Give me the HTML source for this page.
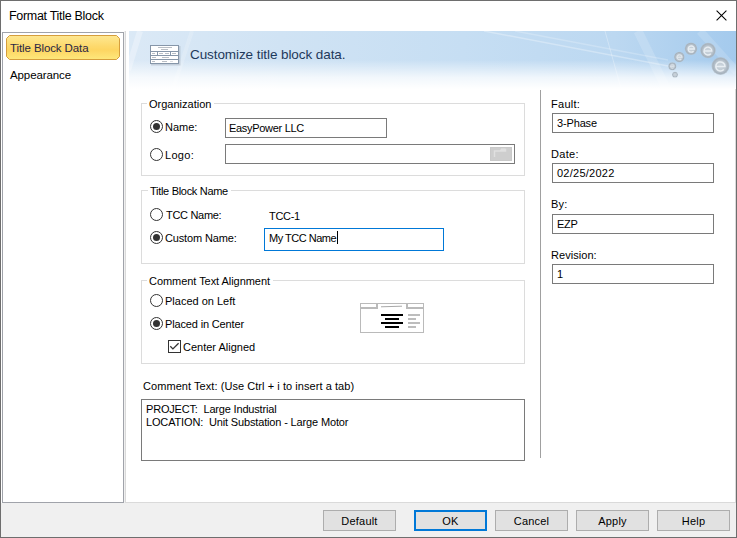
<!DOCTYPE html>
<html><head><meta charset="utf-8">
<style>
*{margin:0;padding:0;box-sizing:border-box}
html,body{width:737px;height:538px;overflow:hidden;background:#fff}
body{position:relative;font-family:"Liberation Sans",sans-serif;font-size:11px;color:#000}
.a{position:absolute;white-space:nowrap}
.t{position:absolute;white-space:nowrap;line-height:13px;letter-spacing:-0.3px}
.box{position:absolute;border:1px solid #7a7a7a;background:#fff}
.grp{position:absolute;border:1px solid #dcdcdc}
.rad{position:absolute;width:13px;height:13px;border:1px solid #333;border-radius:50%;background:#fff}
.rad.on::after{content:"";position:absolute;left:2px;top:2px;width:7px;height:7px;border-radius:50%;background:#333}
.btn{position:absolute;top:510px;height:21px;border:1px solid #adadad;background:#e1e1e1;text-align:center;line-height:21px;font-size:11px;letter-spacing:0.2px}
</style></head><body>
<!-- window borders -->
<div class="a" style="left:0;top:0;width:737px;height:1px;background:#6e6e6e"></div>
<div class="a" style="left:0;top:0;width:1px;height:538px;background:#6e6e6e"></div>
<div class="a" style="left:736px;top:0;width:1px;height:538px;background:#6e6e6e"></div>
<div class="a" style="left:0;top:537px;width:737px;height:1px;background:#6e6e6e"></div>

<!-- title -->
<div class="a" style="left:9px;top:9px;font-size:12.5px;line-height:15px;letter-spacing:-0.3px;color:#000">Format Title Block</div>
<svg class="a" style="left:716px;top:10px" width="11" height="11" viewBox="0 0 11 11"><path d="M0.6 0.6L10.4 10.4M10.4 0.6L0.6 10.4" stroke="#000" stroke-width="1.05"/></svg>

<!-- bottom area -->
<div class="a" style="left:1px;top:503px;width:735px;height:34px;background:#f0f0f0"></div>
<div class="a" style="left:124px;top:31px;width:1px;height:472px;background:#f0f0f0"></div>

<!-- left list -->
<div class="a" style="left:2px;top:32px;width:122px;height:471px;border:1px solid #a0a3aa;background:#fff"></div>
<svg class="a" style="left:6px;top:35px" width="114" height="25" viewBox="0 0 114 25">
<defs><linearGradient id="sel" x1="0" y1="0" x2="0" y2="1"><stop offset="0" stop-color="#fee892"/><stop offset="0.45" stop-color="#fdd96c"/><stop offset="0.6" stop-color="#fdd562"/><stop offset="1" stop-color="#fee87c"/></linearGradient></defs>
<path d="M3.5 0.5H110.5L113.5 3.5V21.5L110.5 24.5H3.5L0.5 21.5V3.5Z" fill="url(#sel)" stroke="#d69e3c"/>
</svg>
<div class="t" style="left:10px;top:42px;font-size:11.5px;letter-spacing:-0.1px;color:#2a2645">Title Block Data</div>
<div class="t" style="left:10px;top:69px;font-size:11.5px;letter-spacing:-0.1px">Appearance</div>

<!-- right panel -->
<div class="a" style="left:125px;top:31px;width:611px;height:472px;border:1px solid #dadada;border-top:none;background:#fff"></div>
<svg class="a" style="left:129px;top:31px" width="607" height="58" viewBox="129 31 607 58">
<defs>
<linearGradient id="bh" x1="0" y1="0" x2="1" y2="0">
<stop offset="0" stop-color="#dbe9f6"/><stop offset="0.25" stop-color="#d0e3f4"/><stop offset="0.55" stop-color="#c6def3"/><stop offset="0.8" stop-color="#bcd8f1"/><stop offset="1" stop-color="#a4caed"/>
</linearGradient>
<linearGradient id="bv" x1="0" y1="0" x2="0" y2="1">
<stop offset="0" stop-color="#fff" stop-opacity="0"/><stop offset="0.5" stop-color="#fff" stop-opacity="0"/><stop offset="0.8" stop-color="#fff" stop-opacity="0.75"/><stop offset="1" stop-color="#fff" stop-opacity="1"/>
</linearGradient>
<radialGradient id="bub" cx="0.5" cy="0.5" r="0.5">
<stop offset="0" stop-color="#ccd5dd"/><stop offset="0.55" stop-color="#bfc9d2"/><stop offset="0.85" stop-color="#a6b2bd"/><stop offset="1" stop-color="#b3bec8" stop-opacity="0.7"/>
</radialGradient>
<filter id="sb" x="-20%" y="-20%" width="140%" height="140%"><feGaussianBlur stdDeviation="0.45"/></filter>
</defs>
<rect x="129" y="31" width="607" height="58" fill="url(#bh)"/>
<g stroke="#fff" fill="none">
<path d="M484 31L668 66" stroke-opacity="0.3" stroke-width="1.5"/>
<path d="M515 31L668 60" stroke-opacity="0.22" stroke-width="1.5"/>
<path d="M605 31L622 92" stroke-opacity="0.3" stroke-width="1"/>
<path d="M638 31L668 92" stroke-opacity="0.16" stroke-width="9"/>
<path d="M700 31L737 72" stroke-opacity="0.15" stroke-width="8"/>
<path d="M192 31L172 92" stroke-opacity="0.18" stroke-width="4"/>
<path d="M140 31L128 70" stroke-opacity="0.3" stroke-width="6"/>
</g>
<rect x="129" y="31" width="607" height="58" fill="url(#bv)"/>
<g filter="url(#sb)">
<circle cx="720.5" cy="66" r="9" fill="url(#bub)"/>
<circle cx="708" cy="50.5" r="7.8" fill="url(#bub)"/>
<circle cx="691" cy="48.7" r="6.3" fill="url(#bub)"/>
<circle cx="679.3" cy="57" r="5.3" fill="url(#bub)"/>
<circle cx="672.3" cy="66.3" r="4" fill="url(#bub)"/>
<circle cx="675" cy="74.7" r="2.9" fill="url(#bub)"/>
</g>
<g fill="none" stroke="#e8eef3" stroke-linecap="butt" filter="url(#sb)">
<path d="M716 66.5H725A4.6 4.6 0 1 0 723.8 69.6" stroke-width="1.5"/>
<path d="M704.2 51H711.8A3.9 3.9 0 1 0 710.8 53.7" stroke-width="1.3"/>
<path d="M688.2 49H694.4A3.1 3.1 0 1 0 693.6 51.2" stroke-width="1.3"/>
<path d="M677 57.2H682A2.5 2.5 0 1 0 681.3 59" stroke-width="1.1" stroke-opacity="0.8"/>
<path d="M670.6 66.4H674.2A1.8 1.8 0 1 0 673.7 67.7" stroke-width="0.9" stroke-opacity="0.6"/>
</g>
</svg>
<svg class="a" style="left:148px;top:43px" width="36" height="25" viewBox="0 0 36 25">
<defs><filter id="ib" x="-10%" y="-10%" width="120%" height="120%"><feGaussianBlur stdDeviation="0.3"/></filter></defs><g filter="url(#ib)">
<rect x="3" y="3" width="29.5" height="19.5" fill="#8f99a5" opacity="0.35"/>
<rect x="2" y="2" width="29" height="19" fill="#8696a9"/>
<rect x="3" y="3" width="27" height="5" fill="#fff"/>
<rect x="3" y="9" width="6" height="3" fill="#fff"/>
<rect x="10" y="9" width="12" height="3" fill="#fff"/>
<rect x="23" y="9" width="7" height="3" fill="#fff"/>
<rect x="3" y="13" width="27" height="3" fill="#fff"/>
<rect x="3" y="17" width="27" height="3" fill="#fff"/>
<g fill="#a9b0b8" opacity="0.8">
<rect x="10" y="4" width="14" height="1"/><rect x="13" y="6" width="7" height="1"/>
<rect x="4" y="10" width="3" height="1"/><rect x="11" y="10" width="4" height="1"/><rect x="17" y="10" width="4" height="1"/><rect x="24" y="10" width="4" height="1"/>
<rect x="4" y="14" width="4" height="1"/><rect x="14" y="14" width="7" height="1"/>
<rect x="4" y="18" width="3" height="1"/><rect x="14" y="18" width="5" height="1"/><rect x="22" y="18" width="3" height="1" opacity="0.5"/>
</g>
</g></svg>
<div class="a" style="left:190px;top:47px;font-size:13.5px;line-height:16px;letter-spacing:-0.08px;color:#1e395b">Customize title block data.</div>

<!-- Organization group -->
<div class="grp" style="left:141px;top:103px;width:384px;height:73px"></div>
<div class="t" style="left:147px;top:98px;background:#fff;padding:0 3px 0 2px;letter-spacing:0">Organization</div>
<div class="rad on" style="left:150px;top:120px"></div>
<div class="t" style="left:165px;top:121px;letter-spacing:0px">Name:</div>
<div class="box" style="left:225px;top:118px;width:162px;height:20px"></div>
<div class="t" style="left:229px;top:122px">EasyPower LLC</div>
<div class="rad" style="left:150px;top:148px"></div>
<div class="t" style="left:165px;top:149px;letter-spacing:0.3px">Logo:</div>
<div class="box" style="left:225px;top:144px;width:290px;height:20px"></div>
<svg class="a" style="left:490px;top:147px" width="22" height="14" viewBox="0 0 22 14">
<rect x="0" y="0" width="22" height="14" fill="#c9c9c9"/><rect x="1" y="1" width="20" height="12" fill="#cecece"/>
<path d="M4.5 10V4H15.5V2.5H11.5L10.5 4" fill="none" stroke="#e0e0e0" stroke-width="1.5"/><rect x="11" y="1.5" width="4.5" height="2.5" fill="#e0e0e0"/>
</svg>

<!-- Title Block Name group -->
<div class="grp" style="left:141px;top:190px;width:384px;height:74px"></div>
<div class="t" style="left:148px;top:185px;background:#fff;padding:0 3px 0 2px">Title Block Name</div>
<div class="rad" style="left:150px;top:208px"></div>
<div class="t" style="left:166px;top:209px">TCC Name:</div>
<div class="t" style="left:269px;top:210px">TCC-1</div>
<div class="rad on" style="left:150px;top:231px"></div>
<div class="t" style="left:165px;top:232px;letter-spacing:-0.15px">Custom Name:</div>
<div class="box" style="left:264px;top:228px;width:180px;height:23px;border-color:#0078d7"></div>
<div class="t" style="left:269px;top:232px;letter-spacing:-0.5px">My TCC Name</div>
<div class="a" style="left:337px;top:231px;width:1px;height:13px;background:#000"></div>

<!-- Comment Text Alignment group -->
<div class="grp" style="left:141px;top:280px;width:384px;height:84px"></div>
<div class="t" style="left:147px;top:275px;background:#fff;padding:0 3px 0 2px;letter-spacing:-0.05px">Comment Text Alignment</div>
<div class="rad" style="left:150px;top:294px"></div>
<div class="t" style="left:165px;top:295px;letter-spacing:0px">Placed on Left</div>
<div class="rad on" style="left:150px;top:317px"></div>
<div class="t" style="left:165px;top:318px;letter-spacing:-0.15px">Placed in Center</div>
<div class="a" style="left:168px;top:340px;width:13px;height:13px;border:1px solid #333;background:#fff"></div>
<svg class="a" style="left:168px;top:340px" width="13" height="13"><path d="M2.3 6.3L4.9 8.9L10.6 3.2" stroke="#333" stroke-width="1.3" fill="none"/></svg>
<div class="t" style="left:183px;top:341px;letter-spacing:0px">Center Aligned</div>
<svg class="a" style="left:360px;top:303px" width="64" height="30" viewBox="0 0 64 30">
<rect x="0.5" y="0.5" width="63" height="29" fill="#fff" stroke="#bababa"/>
<path d="M0 5H17V0M47 0V5H64" fill="none" stroke="#bababa" stroke-width="2"/>
<path d="M21 3.8L42 3.2" stroke="#a8a8a8" stroke-width="1"/>
<g fill="#000">
<rect x="21" y="11" width="22" height="2"/><rect x="25" y="15" width="14" height="2"/>
<rect x="21" y="19" width="22" height="2"/><rect x="25" y="23" width="14" height="2"/>
</g>
<g fill="#bdbdbd">
<rect x="48" y="11" width="12" height="2"/><rect x="48" y="15" width="8" height="2"/>
<rect x="48" y="19" width="12" height="2"/><rect x="48" y="23" width="8" height="2"/>
</g>
</svg>


<!-- Comment text -->
<div class="t" style="left:143px;top:380px;letter-spacing:0.06px">Comment Text: (Use Ctrl + i to insert a tab)</div>
<div class="box" style="left:141px;top:399px;width:384px;height:62px"></div>
<div class="t" style="left:146px;top:403px;letter-spacing:-0.18px">PROJECT:&nbsp; Large Industrial</div>
<div class="t" style="left:146px;top:416px;letter-spacing:-0.15px">LOCATION:&nbsp; Unit Substation - Large Motor</div>

<!-- separator -->
<div class="a" style="left:540px;top:90px;width:1px;height:368px;background:#a0a0a0"></div>

<!-- right fields -->
<div class="t" style="left:551px;top:98px;letter-spacing:0.28px">Fault:</div>
<div class="box" style="left:552px;top:113px;width:162px;height:20px"></div>
<div class="t" style="left:557px;top:117px;letter-spacing:-0.15px">3-Phase</div>
<div class="t" style="left:551px;top:148px;letter-spacing:0.3px">Date:</div>
<div class="box" style="left:552px;top:163px;width:162px;height:20px"></div>
<div class="t" style="left:557px;top:167px;letter-spacing:0.25px">02/25/2022</div>
<div class="t" style="left:551px;top:198px;letter-spacing:0.2px">By:</div>
<div class="box" style="left:552px;top:214px;width:162px;height:20px"></div>
<div class="t" style="left:557px;top:218px">EZP</div>
<div class="t" style="left:551px;top:249px;letter-spacing:0.05px">Revision:</div>
<div class="box" style="left:552px;top:264px;width:162px;height:20px"></div>
<div class="t" style="left:557px;top:268px">1</div>

<!-- buttons -->
<div class="btn" style="left:323px;width:73px">Default</div>
<div class="btn" style="left:414px;width:73px;border:2px solid #0078d7;line-height:19px">OK</div>
<div class="btn" style="left:495px;width:73px">Cancel</div>
<div class="btn" style="left:576px;width:73px">Apply</div>
<div class="btn" style="left:657px;width:73px">Help</div>
</body></html>
